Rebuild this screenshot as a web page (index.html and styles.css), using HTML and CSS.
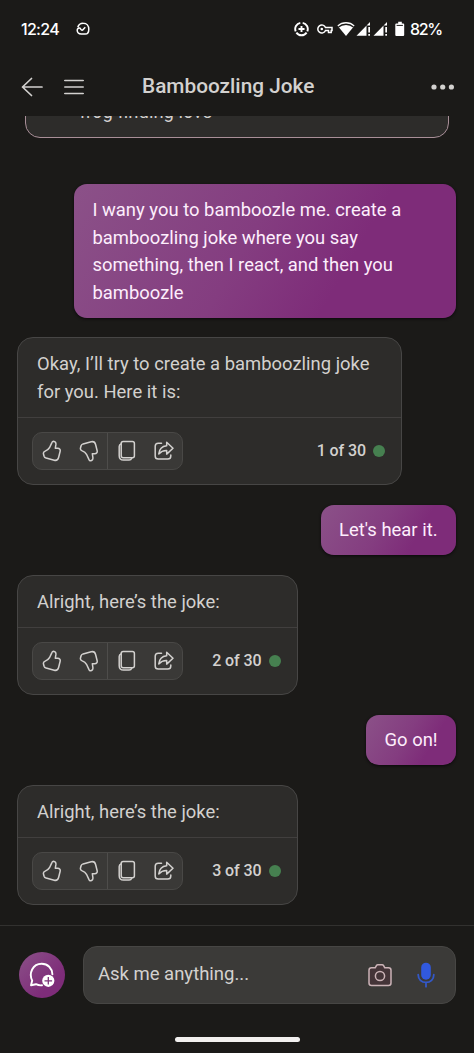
FILE: index.html
```
<!DOCTYPE html>
<html lang="en">
<head>
<meta charset="utf-8">
<title>Bamboozling Joke</title>
<link rel="stylesheet" href="styles.css">
</head>
<body>
<svg class="defs" width="0" height="0" aria-hidden="true">
  <symbol id="up" viewBox="0 0 20 22"><path d="M11.500 1.200c1.700.2 2.600 1.500 2.400 3.200l-.6 3.900h2.300c2 0 3 1.300 2.500 3.200l-1.500 6c-.6 2.300-2.100 3.300-4.400 2.700L4.100 18.100c-1-.3-1.700-.9-2-1.900L1.500 14c-.3-1.200.2-2.100 1.300-2.600C5.200 10.400 6.600 9.500 7.500 7.700l2.400-5.100c.3-.8.800-1.400 1.600-1.400z"/></symbol>
  <symbol id="copy" viewBox="0 0 20 22"><rect x="4.200" y="1.500" width="13.200" height="16.300" rx="2"/><path d="M4 3.900c-1.200.4-1.800 1.200-1.800 2.500v9.300c0 2.900 1.500 4.400 4.400 4.400h5.500c1.300 0 2.200-.6 2.600-1.800"/></symbol>
  <symbol id="share" viewBox="0 0 20 22"><path d="M7.500 3.200H4.300C2.400 3.200 1.200 4.400 1.200 6.300v9.600c0 1.900 1.200 3.100 3.100 3.100h9.400c1.900 0 3.100-1.200 3.100-3.100v-1"/><path d="M12.700 2.300 19 8.200l-6.300 5.900v-3.500c-3.300-.1-5.600.8-7.900 3.300.4-4.700 3.100-7.700 7.900-8.200z"/></symbol>
</svg>
<div class="screen">
  <div class="status">
    <span class="time">12:24</span>
    <svg class="status-app" width="14" height="14" viewBox="0 0 14 14"><path d="M1.800 5.200A5.600 5.600 0 0 1 7.300 1.200C10.800 1.200 12.800 4 12.800 7.200c0 3.300-1.300 4.900-3.600 4.900H5.200C2.700 12.100 1.200 10.600 1.200 8.300M1.200 8.300C1.200 6.900 2.200 6 3.400 6c1.300 0 1.300 2.200 2.600 2.200 1 0 1.500-1.400 3.300-3"/></svg>
    <svg class="status-icons" width="112" height="18" viewBox="0 0 112 18">
      <g fill="none" stroke="#fff" stroke-width="1.900"><path d="M8.700 2.900a6.200 6.200 0 0 1 4.600 8.500M12.600 12.600a6.200 6.200 0 0 1-10.200 0M1.700 11.400a6.200 6.200 0 0 1 4.600-8.500"/><path d="M7.500 6v6M4.500 9h6"/></g>
      <g fill="none" stroke="#fff" stroke-width="1.500"><path d="M31.500 7.500a4 4 0 1 0 0 3h3v2h2.700v-2H38v-3z"/></g><circle cx="27.800" cy="9" r="1.300" fill="#fff"/>
      <path fill="#fff" d="M43.400 5.500C48 .9 56 .9 60.600 5.500L52 15.900z"/><path fill="none" stroke="#1c1b19" stroke-width="1.300" d="M44.500 7c4-3.700 11-3.700 15 0"/>
      <path fill="#fff" d="M62.500 15.700 76 2v3.600h-3.500v10.100zM74.300 7h1.700v5.500h-1.700zM74.300 13.900h1.700v1.800h-1.700zM79.500 15.700 93 2v3.600h-3.500v10.100zM91.300 7h1.700v5.500h-1.700zM91.300 13.900h1.700v1.800h-1.700z"/>
      <path fill="#fff" d="M104.200 1.800h3.600v1.600h1.400q1 0 1 1v10.700q0 1-1 1h-6.900q-1 0-1-1V4.400q0-1 1-1h1.900z"/><path fill="#1c1b19" d="M102.600 4.900h6.300v1h-6.300z"/>
    </svg>
    <span class="battery">82%</span>
  </div>
  <header class="header">
    <svg width="22" height="20" viewBox="0 0 22 20"><path d="M10.500 1.500 1.500 10l9 8.500M1.500 10H21"/></svg>
    <svg class="menu" width="20" height="16" viewBox="0 0 20 16"><path d="M.8 1.500h18.400M.8 8h18.400M.8 14.500h18.400"/></svg>
    <h1 class="title">Bamboozling Joke</h1>
    <svg class="more" width="24" height="8" viewBox="0 0 24 8"><circle cx="3" cy="4" r="2.600"/><circle cx="11.700" cy="4" r="2.600"/><circle cx="20.400" cy="4" r="2.600"/></svg>
  </header>
  <main class="chat">
    <div class="clip"><div class="suggestion">frog finding love</div></div>
    <div class="user first">I wany you to bamboozle me. create a<br>bamboozling joke where you say<br>something, then I react, and then you<br>bamboozle</div>
    <article class="card wide">
      <p class="reply">Okay, I’ll try to create a bamboozling joke<br>for you. Here it is:</p>
      <div class="actions">
        <div class="tools"><svg class="icon"><use href="#up"/></svg><svg class="icon down"><use href="#up"/></svg><i class="sep"></i><svg class="icon"><use href="#copy"/></svg><svg class="icon"><use href="#share"/></svg></div>
        <span class="count">1 of 30</span><i class="dot"></i>
      </div>
    </article>
    <div class="user">Let's hear it.</div>
    <article class="card">
      <p class="reply">Alright, here’s the joke:</p>
      <div class="actions">
        <div class="tools"><svg class="icon"><use href="#up"/></svg><svg class="icon down"><use href="#up"/></svg><i class="sep"></i><svg class="icon"><use href="#copy"/></svg><svg class="icon"><use href="#share"/></svg></div>
        <span class="count">2 of 30</span><i class="dot"></i>
      </div>
    </article>
    <div class="user">Go on!</div>
    <article class="card">
      <p class="reply">Alright, here’s the joke:</p>
      <div class="actions">
        <div class="tools"><svg class="icon"><use href="#up"/></svg><svg class="icon down"><use href="#up"/></svg><i class="sep"></i><svg class="icon"><use href="#copy"/></svg><svg class="icon"><use href="#share"/></svg></div>
        <span class="count">3 of 30</span><i class="dot"></i>
      </div>
    </article>
  </main>
  <footer class="footer">
    <div class="composer">
      <div class="new-topic"><svg width="28" height="28" viewBox="0 0 28 28"><path fill="none" stroke="#fff" stroke-width="1.900" stroke-linejoin="round" stroke-linecap="round" d="M14 24.300c-2.200.2-4.200-.2-6-1.100L3 24.300l1.200-4.700C.6 12.500 4.500 2.800 13.700 2.800c6.200 0 10.300 4.500 10.700 10.400"/><circle cx="20.300" cy="19.800" r="6.100" fill="#fff"/><path stroke="#7b3378" stroke-width="1.300" d="M20.300 16v7.600M16.500 19.800h7.600"/></svg></div>
      <div class="field">
        <span class="placeholder">Ask me anything...</span>
        <svg width="24" height="24" viewBox="0 0 24 24"><path fill="#443438" stroke="#cbb3b7" stroke-width="1.500" stroke-linejoin="round" d="M3.500 4.800h3.700l1.200-2.200q.5-.9 1.500-.9h4.200q1 0 1.500.9l1.200 2.200h3.700q2.500 0 2.500 2.500V20q0 2.500-2.500 2.500h-17Q1 22.500 1 20V7.300q0-2.500 2.500-2.500z"/><circle cx="12" cy="13" r="4.600" fill="#443438" stroke="#cbb3b7" stroke-width="1.500"/></svg>
        <svg class="mic" width="18" height="26" viewBox="0 0 18 26"><rect x="4.200" y=".7" width="9.600" height="17" rx="4.800" fill="#3159df"/><path fill="none" stroke="#3358c8" stroke-width="1.800" stroke-linecap="round" d="M1.200 12.700c0 4.600 3.300 7.700 7.800 7.700s7.800-3.100 7.800-7.700M9 20.400v4.300"/></svg>
      </div>
    </div>
    <div class="home"></div>
  </footer>
</div>
</body>
</html>
```
FILE: styles.css
```
* { box-sizing: border-box; }
body { margin: 0; background: #1b1a18; font-family: Roboto, sans-serif; color: #d3d1cf; }
.defs { display: block; }
.screen { width: 474px; height: 1053px; display: flex; flex-direction: column; overflow: hidden; }
.status { height: 58px; flex: none; display: flex; align-items: center; padding-left: 21px; color: #fff; font: 500 16px/20px Inter, sans-serif; }
.time { width: 55px; letter-spacing: -.7px; }
.status-app { fill: none; stroke: #fff; stroke-width: 1.500; }
.status-icons { margin-left: 204px; }
.battery { margin-left: 4px; letter-spacing: -1.300px; }
.header { height: 58px; flex: none; display: flex; align-items: center; padding: 0 0 1px 21px; }
.header svg { fill: none; stroke: #d3d1cf; stroke-width: 1.700; stroke-linecap: round; stroke-linejoin: round; }
.header .menu { margin-left: 21px; }
.title { margin: 0 0 1px 58px; width: 289px; font-size: 20.800px; line-height: 28px; font-weight: 500; white-space: nowrap; }
.header .more { fill: #d3d1cf; stroke: none; flex: none; }
.chat { flex: 1; min-height: 0; display: flex; flex-direction: column; align-items: flex-end; padding: 0 18px 0 17px; font-size: 18.400px; letter-spacing: .02px; line-height: 27.600px; }
.clip { height: 22px; width: 424px; margin-right: 7px; flex: none; overflow: hidden; display: flex; align-items: flex-end; }
.suggestion { flex: 1; height: 60px; padding: 18.500px 0 0 53.500px; border: 1px solid #a98f98; border-radius: 15px; background: #2d2c2a; }
.user { padding: 11.800px 18.400px 11.200px; border-radius: 13px; color: #fdeefc; background: linear-gradient(120deg, #8b5188 0%, #843d80 45%, #7e2c79 70%, #7e2c79 100%); box-shadow: 0 1px 3px #0c080c; white-space: nowrap; }
.user.first { width: 382px; margin-top: 46px; padding: 12px 18.400px 11.400px; }
.card { align-self: flex-start; flex: none; width: 280.500px; margin: 19.600px 0; border: 1px solid #474645; border-radius: 16px; background: #2d2c2a; }
.card.wide { width: 385px; }
.reply { margin: 0; padding: 12px 19px 11.500px; border-bottom: 1px solid #413f3e; white-space: nowrap; }
.actions { height: 66px; display: flex; align-items: center; padding: 0 16px 0 14px; }
.tools { width: 151px; height: 38.500px; display: flex; align-items: center; border: 1px solid #494846; border-radius: 10px; background: #3a3937; }
.icon { width: 20px; height: 22px; margin: 0 8.500px 0 8.500px; flex: none; fill: none; stroke: #d3d1cf; stroke-width: 1.500; stroke-linejoin: round; stroke-linecap: round; }
.down { transform: scaleY(-1); }
.sep { width: 1px; flex: none; align-self: stretch; background: #4e4d4b; }
.count { margin-left: auto; font-size: 16px; letter-spacing: -.1px; font-weight: 500; white-space: nowrap; }
.dot { width: 12px; height: 12px; margin-left: 7px; border-radius: 50%; background: #468050; }
.footer { height: 128px; flex: none; border-top: 1px solid #32312f; padding: 20px 17.500px 0 18.600px; }
.composer { display: flex; align-items: center; }
.new-topic { width: 46px; height: 46px; border-radius: 50%; background: linear-gradient(135deg, #8b5188, #7e2c79 70%); display: grid; place-items: center; }
.field { width: 373.500px; height: 57.500px; margin-left: 18.300px; padding: 0 20px 0 14px; display: flex; align-items: center; border: 1px solid #474644; border-radius: 14px; background: #3b3a38; }
.placeholder { flex: 1; font-size: 18.500px; padding-bottom: 1px; }
.mic { margin-left: 25px; }
.home { width: 124.500px; height: 5px; margin: 33px auto 0; border-radius: 3px; background: #f2f0ef; }
```
